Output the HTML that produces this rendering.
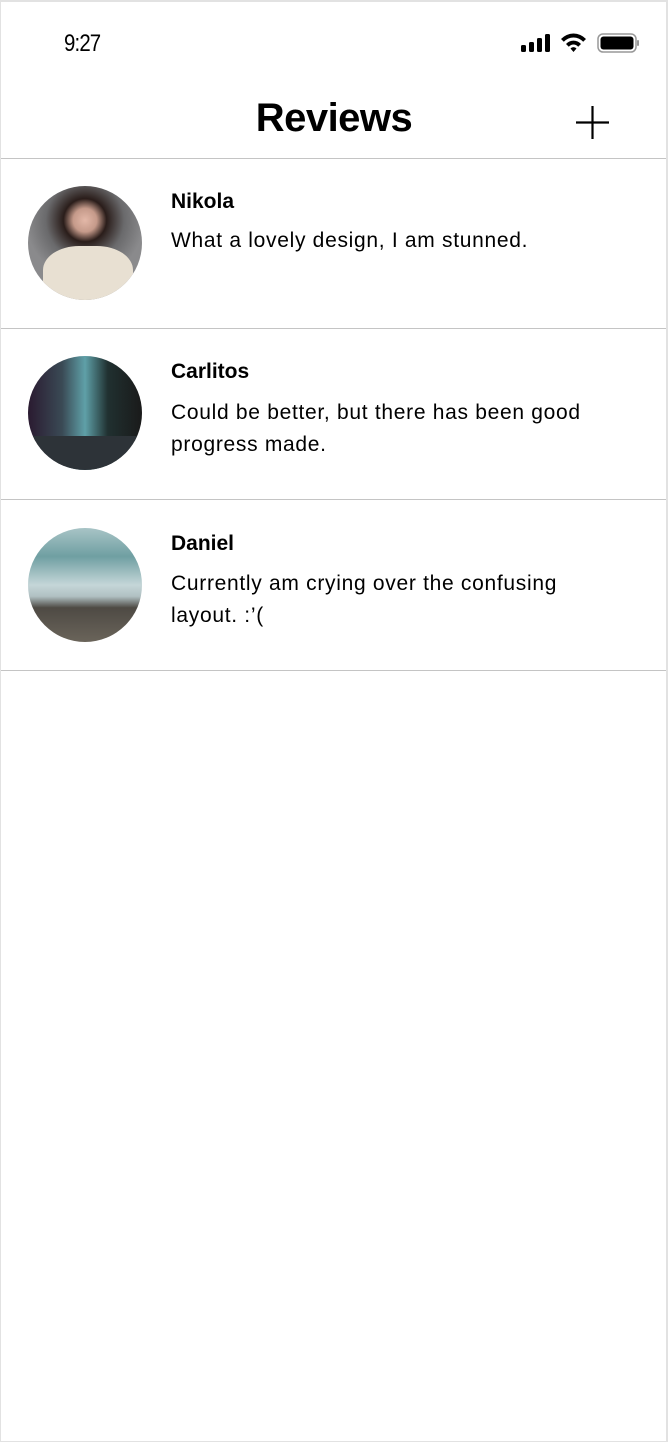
<!DOCTYPE html>
<html><head><meta charset="utf-8"><style>
*{margin:0;padding:0;box-sizing:border-box}
body{width:668px;height:1442px;background:#fff;font-family:"Liberation Sans",sans-serif;position:relative;overflow:hidden}
.frame{position:absolute;left:0;top:0;width:668px;height:1442px;border:solid #e2e2e2;border-width:2px 2px 1px 1px;pointer-events:none}
.time{position:absolute;left:64px;top:30px;font-size:24px;letter-spacing:-1px;transform:scaleX(.85);transform-origin:left}
.title{position:absolute;left:0;width:668px;top:96px;text-align:center;font-size:40px;font-weight:bold;letter-spacing:-0.5px}
.line{position:absolute;left:0;width:668px;height:1px;background:#c4c4c4}
.av{position:absolute;left:28px;width:114px;height:114px;border-radius:50%;overflow:hidden}
.name{position:absolute;left:171px;font-size:21px;font-weight:bold;top:0}
.txt{position:absolute;left:171px;font-size:21px;line-height:32px;width:440px;letter-spacing:.7px}
</style></head><body>
<div class="time">9:27</div>
<svg style="position:absolute;left:520px;top:32px" width="120" height="22" viewBox="0 0 120 22">
<rect x="1" y="13" width="5" height="7" rx="1.5"/><rect x="9" y="10" width="5" height="10" rx="1.5"/><rect x="17" y="6" width="5" height="14" rx="1.5"/><rect x="25" y="2" width="5" height="18" rx="1.5"/>
<path d="M41 7a17 17 0 0 1 25 0l-2.8 2.8a13 13 0 0 0-19.4 0z M46 12a10 10 0 0 1 15 0l-2.8 2.8a6 6 0 0 0-9.4 0z M50.5 16.5a4 4 0 0 1 6 0L53.5 20z"/>
<rect x="78" y="2" width="38" height="18" rx="5" fill="none" stroke="#999" stroke-width="1.5"/><rect x="80.5" y="4.5" width="33" height="13" rx="3"/><rect x="117" y="8" width="2" height="6" rx="1" fill="#999"/>
</svg>
<div class="title">Reviews</div>
<svg style="position:absolute;left:575px;top:105px" width="36" height="36"><path d="M17.5 1v33M1 17.5h33" stroke="#000" stroke-width="2.2"/></svg>
<div class="line" style="top:158px"></div>
<div class="line" style="top:328px"></div>
<div class="line" style="top:499px"></div>
<div class="line" style="top:670px"></div>

<div class="av" style="top:186px;background:radial-gradient(circle at 50% 30%,#e3b8a8 0,#c59a8a 12%,#2a1d1a 22%,#6a6a6c 40%,#8a8a8c 60%);">
<div style="position:absolute;left:15px;top:60px;width:90px;height:60px;border-radius:40% 40% 0 0;background:#e8e0d2"></div></div>
<div class="av" style="top:356px;background:linear-gradient(90deg,#2a1a30 0,#3a4a55 30%,#5fa0a8 50%,#203030 70%,#1a1a1a 100%);">
<div style="position:absolute;left:0;top:80px;width:114px;height:34px;background:#2d3338"></div></div>
<div class="av" style="top:528px;background:linear-gradient(180deg,#a8c4c6 0,#6f9fa2 25%,#c5d6d8 50%,#b0c0c2 60%,#4e4a44 70%,#6a645a 100%);"></div>

<div class="name" style="top:190px">Nikola</div>
<div class="txt" style="top:225px">What a lovely design, I am stunned.</div>
<div class="name" style="top:360px">Carlitos</div>
<div class="txt" style="top:397px">Could be better, but there has been good progress made.</div>
<div class="name" style="top:532px">Daniel</div>
<div class="txt" style="top:568px">Currently am crying over the confusing layout. :’(</div>
<div class="frame"></div>
</body></html>
